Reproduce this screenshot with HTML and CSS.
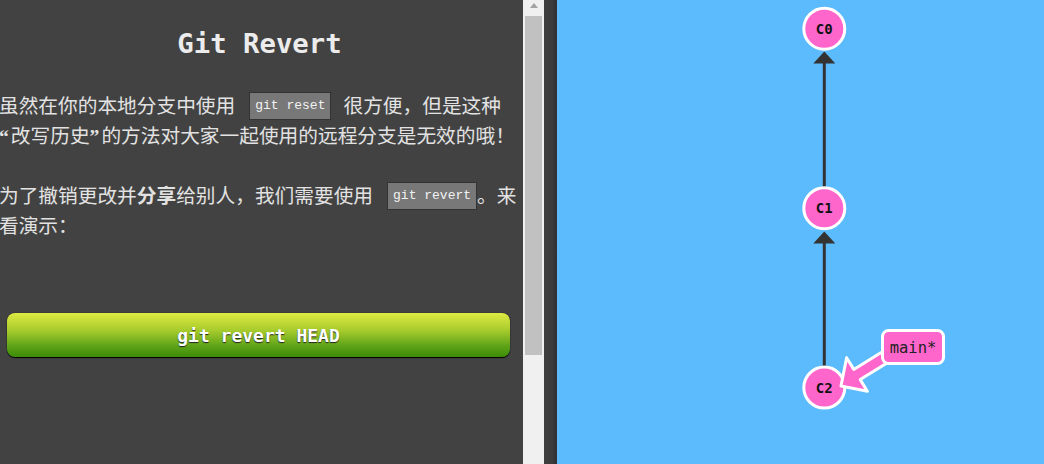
FILE: index.html
```html
<!DOCTYPE html>
<html lang="zh-CN">
<head>
<meta charset="utf-8">
<title>Git Revert</title>
<link rel="stylesheet" href="styles.css">
</head>
<body>
<div class="app">
  <section class="lesson">
    <div class="lesson-inner">
      <h1 class="title">Git Revert</h1>
      <p class="para">虽然在你的本地分支中使用<code class="cmd">git reset</code>很方便，但是这种<span class="q">“</span>改写历史<span class="q">”</span>的方法对大家一起使用的远程分支是无效的哦！</p>
      <p class="para">为了撤销更改并<strong class="em">分享</strong>给别人，我们需要使用<code class="cmd cmd-tight">git revert</code>。来看演示：</p>
      <button class="run-btn" type="button">git revert HEAD</button>
    </div>
  </section>
  <div class="scrollbar">
    <span class="scroll-arrow"></span>
    <span class="scroll-thumb"></span>
  </div>
  <div class="divider"></div>
  <section class="canvas">
    <svg class="graph" width="487" height="464" viewBox="0 0 487 464" xmlns="http://www.w3.org/2000/svg">
      <line class="edge" x1="267.3" y1="366" x2="267.3" y2="242"/>
      <polygon class="arrowhead" points="256.3,243.5 278.3,243.5 267.3,231.5"/>
      <line class="edge" x1="267.3" y1="187" x2="267.3" y2="63"/>
      <polygon class="arrowhead" points="256.3,63.5 278.3,63.5 267.3,51.5"/>
      <circle class="node" cx="267.3" cy="28.7" r="20.5"/>
      <circle class="node" cx="267.3" cy="208.2" r="20.5"/>
      <circle class="node" cx="267.3" cy="387.6" r="20.5"/>
      <text class="node-label" x="267.3" y="33.6">C0</text>
      <text class="node-label" x="267.3" y="213.1">C1</text>
      <text class="node-label" x="267.3" y="392.5">C2</text>
      <polygon class="branch-arrow" points="284,386 310.4,391.3 303.2,379.6 341.4,355.9 335,345.7 296.8,369.4 289.6,357.7"/>
      <rect class="branch-box" x="325.5" y="330.5" width="61" height="33" rx="6" ry="6"/>
      <text class="branch-label" x="356" y="353.3">main*</text>
    </svg>
  </section>
</div>
</body>
</html>
```

FILE: styles.css
```css
html, body {
  margin: 0;
  padding: 0;
}

body {
  width: 1044px;
  height: 464px;
  overflow: hidden;
  background: #424242;
}

.app {
  display: flex;
  height: 464px;
}

.lesson {
  width: 523px;
  flex: 0 0 523px;
  background: #424242;
  overflow: hidden;
}

.lesson-inner {
  width: 521px;
  margin-left: -1px;
}

.title {
  margin: 24px 0 0;
  font-family: "DejaVu Sans Mono", monospace;
  font-weight: bold;
  font-size: 27.3px;
  line-height: 40px;
  text-align: center;
  color: #ececec;
}

.para {
  margin: 27px 0 0;
  font-family: "Liberation Serif", "Noto Sans CJK SC", sans-serif;
  font-size: 19.7px;
  line-height: 30px;
  color: #e2e2e2;
}

.para + .para {
  margin-top: 30px;
}

.q {
  font-weight: bold;
  letter-spacing: 2px;
}

.em {
  font-weight: bold;
}

.cmd {
  display: inline-block;
  font-family: "Liberation Mono", monospace;
  font-size: 13px;
  line-height: 26px;
  padding: 0 5px;
  margin: 0 12px 0 14px;
  background: #787878;
  border: 1px solid #333;
  color: #f2f2f2;
  vertical-align: 4.5px;
}

.cmd-tight {
  margin-right: 0;
}

.run-btn {
  display: block;
  width: 503px;
  height: 44px;
  margin: 72px 0 0 8px;
  padding: 0;
  border: none;
  border-radius: 8px;
  background: linear-gradient(to bottom, #dfe942 0%, #a6cb2c 40%, #5ea318 75%, #3c8c08 100%);
  box-shadow: 0 1px 1px #000, 0 0 1px #111;
  font-family: "DejaVu Sans Mono", monospace;
  font-weight: bold;
  font-size: 18px;
  color: #fff;
  text-shadow: 0 1px 1px #222;
}

.scrollbar {
  flex: 0 0 21px;
  display: flex;
  flex-direction: column;
  align-items: center;
  background: #f0f0f0;
}

.scroll-arrow {
  margin-top: 3px;
  width: 0;
  height: 0;
  border-left: 4.5px solid transparent;
  border-right: 4.5px solid transparent;
  border-bottom: 5px solid #a3a3a3;
}

.scroll-thumb {
  margin-top: 8px;
  width: 17px;
  height: 339px;
  background: #c1c1c1;
}

.divider {
  flex: 0 0 13px;
  background: linear-gradient(to right, #3f3f3f 0%, #3b3b3b 60%, #303030 100%);
}

.canvas {
  flex: 1 1 auto;
  background: #5cbbfc;
}

.graph {
  display: block;
}

.edge {
  stroke: #333;
  stroke-width: 3;
}

.arrowhead {
  fill: #333;
}

.node {
  fill: #ff66cc;
  stroke: #fff;
  stroke-width: 3;
}

.node-label {
  font-family: "DejaVu Sans Mono", monospace;
  font-weight: bold;
  font-size: 14px;
  text-anchor: middle;
  fill: #111;
}

.branch-arrow {
  fill: #ff66cc;
  stroke: #fff;
  stroke-width: 3;
  stroke-linejoin: round;
}

.branch-box {
  fill: #ff66cc;
  stroke: #fff;
  stroke-width: 3;
}

.branch-label {
  font-family: "DejaVu Sans Mono", monospace;
  font-size: 15.5px;
  text-anchor: middle;
  fill: #222;
}
```
